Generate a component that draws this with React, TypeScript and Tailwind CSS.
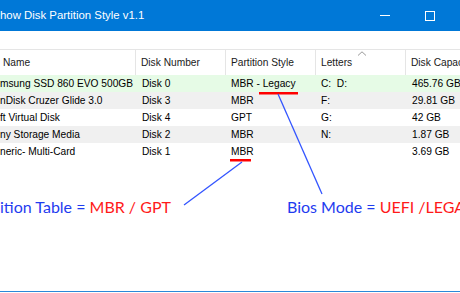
import React from "react";

const rows = [
  { name: "msung SSD 860 EVO 500GB", num: "Disk 0", style: "MBR - Legacy", letters: "C:  D:", cap: "465.76 GB", bg: "bg-[#e6fbe6]" },
  { name: "nDisk Cruzer Glide 3.0", num: "Disk 3", style: "MBR", letters: "F:", cap: "29.81 GB", bg: "bg-[#f0f0f0]" },
  { name: "ft Virtual Disk", num: "Disk 4", style: "GPT", letters: "G:", cap: "42 GB", bg: "bg-white" },
  { name: "ny Storage Media", num: "Disk 2", style: "MBR", letters: "N:", cap: "1.87 GB", bg: "bg-[#f0f0f0]" },
  { name: "neric- Multi-Card", num: "Disk 1", style: "MBR", letters: "", cap: "3.69 GB", bg: "bg-white" },
];

export default function App() {
  return (
    <div
      className="relative w-[460px] h-[293px] bg-white overflow-hidden flex flex-col"
      style={{ fontFamily: '"Liberation Sans", Arial, sans-serif' }}
    >
      {/* Title bar */}
      <div className="h-[31px] bg-[#0078d7] flex items-center shrink-0">
        <span className="text-white text-[11.4px] whitespace-nowrap pl-0">how Disk Partition Style v1.1</span>
        <div className="ml-auto flex items-center">
          <div className="w-[10px] h-px bg-white mr-[35px]" />
          <div className="w-[10px] h-[10px] border border-white mr-[25px]" />
        </div>
      </div>
      <div className="h-[18px] shrink-0" />
      <div className="h-px bg-[#e5e5e5] shrink-0" />
      {/* Header */}
      <div className="relative h-[25px] flex text-[10.2px] text-[#1a1a1a] shrink-0 whitespace-nowrap">
        <div className="w-[136px] shrink-0 flex items-center pl-[3px] border-r border-[#e5e5e5]">Name</div>
        <div className="w-[90px] shrink-0 flex items-center pl-[5px] border-r border-[#e5e5e5]">Disk Number</div>
        <div className="w-[90px] shrink-0 flex items-center pl-[5px] border-r border-[#e5e5e5]">Partition Style</div>
        <div className="relative w-[90px] shrink-0 flex items-center pl-[5px] border-r border-[#e5e5e5]">
          Letters
          <svg className="absolute left-[41px] top-[1px]" width="10" height="5" viewBox="0 0 10 5">
            <path d="M1 4.5 L5 0.8 L9 4.5" fill="none" stroke="#999" strokeWidth="1" />
          </svg>
        </div>
        <div className="w-[100px] shrink-0 flex items-center pl-[5px]">Disk Capacity</div>
      </div>
      {/* Rows */}
      <div className="flex flex-col text-[10.2px] text-black shrink-0">
        {rows.map((r, i) => (
          <div key={i} className={`h-[17px] flex items-center whitespace-nowrap ${r.bg}`}>
            <div className="w-[136px] shrink-0 overflow-hidden">{r.name}</div>
            <div className="w-[90px] shrink-0 pl-[6px]">{r.num}</div>
            <div className="w-[90px] shrink-0 pl-[5px] whitespace-pre">{r.style}</div>
            <div className="w-[90px] shrink-0 pl-[5px] whitespace-pre">{r.letters}</div>
            <div className="w-[100px] shrink-0 pl-[6px]">{r.cap}</div>
          </div>
        ))}
      </div>
      {/* Annotation text */}
      <div
        className="mt-[39px] flex text-[16px] whitespace-nowrap leading-none"
        style={{ fontFamily: "Lato, 'Liberation Sans', sans-serif" }}
      >
        <div className="w-[287px] shrink-0 text-[#1f3cf0]">
          ition Table = <span className="text-[#ff1a1a]">MBR / GPT</span>
        </div>
        <div className="shrink-0 text-[#1f3cf0]">
          Bios Mode = <span className="text-[#ff1a1a]">UEFI /LEGACY</span>
        </div>
      </div>
      <div className="mt-auto h-px bg-[#2b88d8] mb-[1px] shrink-0" />

      {/* Overlay markings */}
      <svg className="absolute left-0 top-0 pointer-events-none" width="460" height="293">
        <rect x="259" y="92" width="39" height="2.5" fill="#ff0000" />
        <rect x="230" y="159" width="21" height="2.5" fill="#ff0000" />
        <line x1="278" y1="94" x2="322" y2="194" stroke="#3355ff" strokeWidth="1.3" />
        <line x1="242" y1="162" x2="184" y2="205" stroke="#3355ff" strokeWidth="1.3" />
      </svg>
    </div>
  );
}
